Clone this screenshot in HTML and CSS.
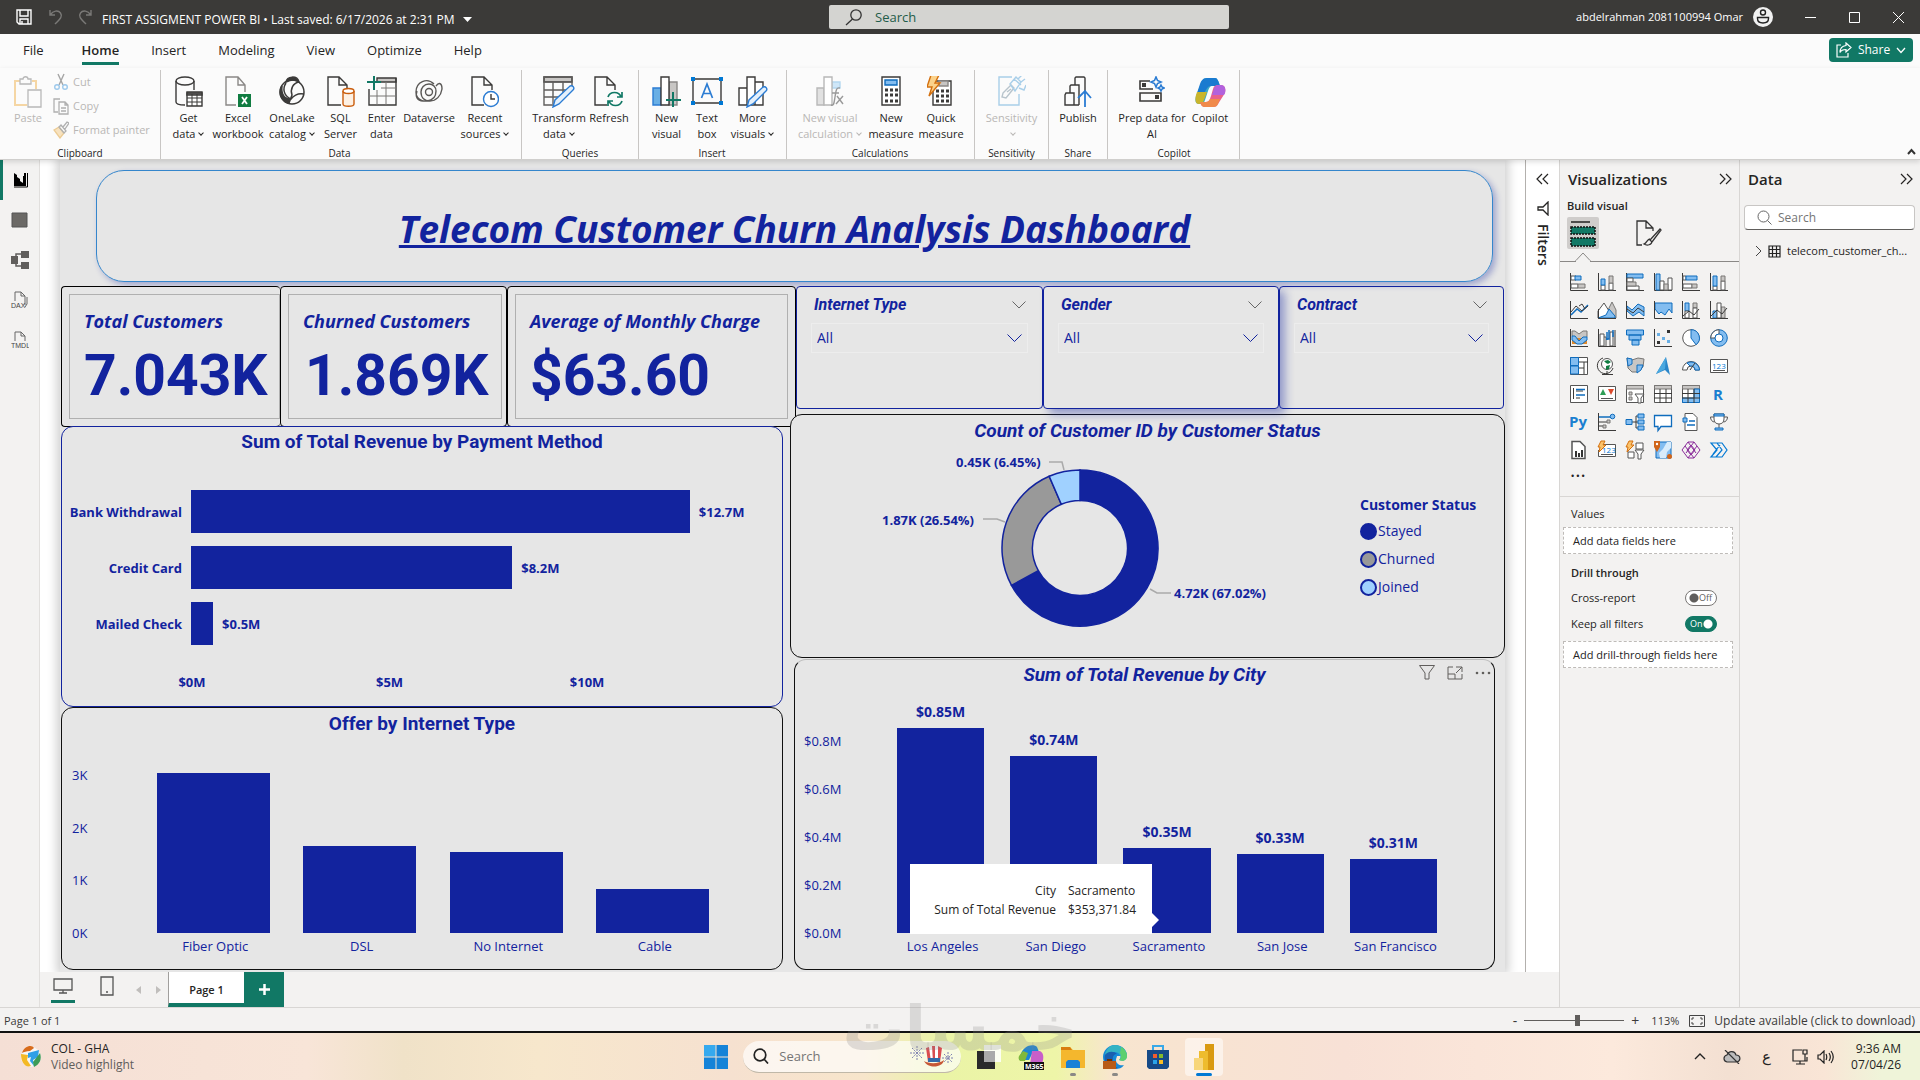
FILE: index.html
```html
<!DOCTYPE html>
<html lang="en">
<head>
<meta charset="utf-8">
<title>FIRST ASSIGMENT POWER BI</title>
<link rel="stylesheet" href="styles.css">
</head>
<body>
<header class="titlebar">
  <button class="bare" aria-label="Save"><svg width="18" height="18" viewBox="0 0 18 18" fill="none" stroke="#fff" stroke-width="1.4"><path d="M2 2h14v14H4l-2-2zM5 2v6h8V2M5 16v-5h8v5M7 16v-3"/></svg></button>
  <button class="bare" aria-label="Undo"><svg width="16" height="18" viewBox="0 0 16 18" fill="none" stroke="#7a7977" stroke-width="1.4"><path d="M2 2v5h5M2.500 6.500C5 3 10 1.500 12.500 5S12 11 7 16"/></svg></button>
  <button class="bare" aria-label="Redo"><svg width="16" height="18" viewBox="0 0 16 18" fill="none" stroke="#7a7977" stroke-width="1.400"><path d="M14 2v5H9M13.500 6.500C11 3 6 1.500 3.500 5S4 11 9 16"/></svg></button>
  <button class="bare file-name">FIRST ASSIGMENT POWER BI • Last saved: 6/17/2026 at 2:31 PM<svg width="9" height="6" viewBox="0 0 9 6"><path d="M0 0h9L4.500 5z" fill="#fff"/></svg></button>
  <label class="top-search"><svg width="18" height="18" viewBox="0 0 18 18" fill="none" stroke="#333" stroke-width="1.300"><circle cx="11" cy="7" r="5.200"/><path d="M7.500 11L1 17"/></svg><input type="text" placeholder="Search" aria-label="Search"></label>
  <div class="account">
    <span>abdelrahman 2081100994 Omar</span>
    <svg width="20" height="20" viewBox="0 0 20 20"><circle cx="10" cy="10" r="10" fill="#f1f1f1"/><g fill="none" stroke="#222" stroke-width="1.400"><circle cx="10" cy="5.500" r="2.500"/><path d="M4.500 10.500h11v1c0 3-2.500 4.500-5.500 4.500s-5.500-1.500-5.500-4.500z"/></g></svg>
    <button class="bare win" aria-label="Minimize"><svg width="11" height="11" stroke="#fff"><path d="M0 5.500h11"/></svg></button>
    <button class="bare win" aria-label="Maximize"><svg width="11" height="11" stroke="#fff" fill="none"><path d="M.5.500h10v10H.500z"/></svg></button>
    <button class="bare win" aria-label="Close"><svg width="11" height="11" stroke="#fff"><path d="M0 0l11 11M11 0L0 11"/></svg></button>
  </div>
</header>

<nav class="tabs">
  <button>File</button><button class="on">Home</button><button>Insert</button><button>Modeling</button><button>View</button><button>Optimize</button><button>Help</button>
  <button class="share"><svg width="16" height="16" viewBox="0 0 16 16" fill="none" stroke="#fff" stroke-width="1.200"><path d="M5 3H1v12h11v-4M10 1l5 4.500L10 10V7.500c-3 0-5 1-6 3 0-4 2-6.500 6-7z"/></svg>Share<svg width="10" height="7" viewBox="0 0 10 7" fill="none" stroke="#fff" stroke-width="1.300"><path d="M1 1l4 4.500L9 1"/></svg></button>
</nav>

<section class="ribbon">
  <div class="group clipboard">
    <div class="tools">
      <button class="tool off w-paste"><svg width="28" height="32" viewBox="0 0 28 32" fill="none"><path d="M6 5H1v24h12M18 5h4v8" stroke="#f5d6a4" stroke-width="2"/><path d="M6 3h3c0-3 5-3 5 0h3v5H6zM14 14h13v17H14z" fill="#fbfbfb" stroke="#b8b8b8" stroke-width="1.300"/></svg><span>Paste</span></button>
      <div class="mini">
        <button><svg width="16" height="18" viewBox="0 0 16 18" fill="none" stroke="#a5a5a5" stroke-width="1.400"><path d="M5 1l5 11M11 1L6 12"/><g stroke="#9dc9ec"><circle cx="4" cy="14" r="2.300"/><circle cx="12" cy="14" r="2.300"/></g></svg>Cut</button>
        <button><svg width="16" height="18" viewBox="0 0 16 18" fill="none" stroke="#b0b0b0" stroke-width="1.300"><path d="M7 2H1v13h4M6 5h6l3 3v9H6zM12 5v3h3M8 11h5M8 14h5"/></svg>Copy</button>
        <button><svg width="16" height="18" viewBox="0 0 16 18" fill="none" stroke="#b0b0b0" stroke-width="1.300"><path d="M1 9l5-3 5 6-4 5z" fill="#f7e2bf" stroke="#eccb93"/><path d="M6 6l5 6 2-2-5-6zM10 6l4-5 2 1-4 6"/></svg>Format painter</button>
      </div>
    </div>
    <h2>Clipboard</h2>
  </div>
  <div class="group">
    <div class="tools">
      <button class="tool w45"><svg width="28" height="32" viewBox="0 0 28 32" fill="none" stroke="#3b3a39" stroke-width="1.400"><path d="M1 5v21c0 2 4 3 9 3M19 5v9"/><ellipse cx="10" cy="5" rx="9" ry="4"/><path d="M12 16h15v14H12z" fill="#fff"/><path d="M12 17h15v2H12z" fill="#888"/><path d="M12 22h15M12 26h15M17 18v12M22 18v12" stroke-width="1"/></svg><span>Get<br>data<i></i></span></button>
      <button class="tool w54"><svg width="28" height="32" viewBox="0 0 28 32" fill="none" stroke="#8a8886" stroke-width="1.400"><path d="M12 29H2V1h12l7 8v7M14 1v8h7"/><path d="M14 18h13v13H14z" fill="#107c41" stroke="none"/><path d="M18 21l5 7M23 21l-5 7" stroke="#fff" stroke-width="1.800"/></svg><span>Excel<br>workbook</span></button>
      <button class="tool w54"><svg width="30" height="32" viewBox="0 0 30 32" fill="none" stroke="#3b3a39" stroke-width="1.500"><path d="M9 6C10 0 20-1 22 6c-4-3-9-2-13 0z" fill="#3b3a39"/><circle cx="15" cy="16" r="12"/><path d="M9 7c-4 6-2 13 5 16 4-5 8-6 13-5M22 6c-6 1-9 7-7 13l-3 8"/><path d="M5 10c-1 8 2 13 8 13l-2 4C4 24 1 16 5 10z" fill="#3b3a39"/></svg><span>OneLake<br>catalog<i></i></span></button>
      <button class="tool w43"><svg width="28" height="32" viewBox="0 0 28 32" fill="none" stroke="#3b3a39" stroke-width="1.400"><path d="M14 29H1V1h11l8 8v3M12 1v8h8"/><g stroke="#ca5d0c"><path d="M16 15v13c0 3 11 3 11 0V15" fill="#fdf0e3"/><ellipse cx="21.500" cy="15" rx="5.500" ry="2.500" fill="#fff"/></g></svg><span>SQL<br>Server</span></button>
      <button class="tool w39"><svg width="30" height="32" viewBox="0 0 30 32" fill="none" stroke="#3b3a39" stroke-width="1.400"><path d="M10 2h19v4H10z" fill="#c8c6c4"/><path d="M2 13v16h27V2"/><path d="M2 20h27M10 14v15M19 6v23M14 12h15" stroke="#797775" stroke-width="1"/><path d="M7 0v14M0 6h14" stroke="#117865" stroke-width="2"/></svg><span>Enter<br>data</span></button>
      <button class="tool w56"><svg width="30" height="32" viewBox="0 0 30 32" fill="none" stroke="#5a5856" stroke-width="1.400"><path d="M20 8C13 1 2 6 2 16c0 6 5 10 11 9 8-1 9-7 9-10 0-4-3-7-7-7-5 0-8 4-8 8 0 7 5 9 9 9 6 0 11-5 12-12 0-6-3-7-6-3M9 25c-6 0-8-5-6-10"/><circle cx="15" cy="16" r="3.500"/></svg><span>Dataverse</span></button>
      <button class="tool w56"><svg width="28" height="32" viewBox="0 0 28 32" fill="none" stroke="#3b3a39" stroke-width="1.400"><path d="M13 29H1V1h12l8 8v5M13 1v8h8"/><circle cx="20" cy="23" r="7.500" fill="#fff" stroke="#2b7cd3"/><path d="M20 18v5h4"/></svg><span>Recent<br>sources<i></i></span></button>
    </div>
    <h2>Data</h2>
  </div>
  <div class="group">
    <div class="tools">
      <button class="tool w58"><svg width="32" height="32" viewBox="0 0 32 32" fill="none" stroke="#3b3a39" stroke-width="1.400"><path d="M1 1h28v5H1z" fill="#c8c6c4"/><path d="M12 29H1V1h28v9M1 14h22M1 21h15M10 6v22M20 6v11" stroke="#605e5c"/><path d="M10 31l2-7 15-14c3-1 5 2 3 4L16 28z" fill="#e4f0fb" stroke="#2b7cd3"/></svg><span>Transform<br>data<i></i></span></button>
      <button class="tool w42"><svg width="30" height="32" viewBox="0 0 30 32" fill="none" stroke="#3b3a39" stroke-width="1.400"><path d="M13 29H1V1h12l8 8v5M13 1v8h8"/><g stroke="#117865" stroke-width="1.700"><path d="M14 21c2-6 11-6 13 0M28 16v5h-5M28 25c-2 6-11 6-13 0M14 30v-5h5"/></g></svg><span>Refresh</span></button>
    </div>
    <h2>Queries</h2>
  </div>
  <div class="group">
    <div class="tools">
      <button class="tool w41"><svg width="30" height="32" viewBox="0 0 30 32" fill="none" stroke="#3b3a39" stroke-width="1.400"><path d="M1 12h8v17H1z" fill="#69afe5" stroke="#2b7cd3"/><path d="M17 6h8v23h-8z" fill="#c8c6c4" stroke="#8a8886"/><path d="M9 1h8v28H9z" fill="#fff"/><path d="M21 16v15M14 24h15" stroke="#117865" stroke-width="2"/></svg><span>New<br>visual</span></button>
      <button class="tool w40"><svg width="32" height="32" viewBox="0 0 32 32" fill="none" stroke="#3b3a39" stroke-width="1.400"><path d="M2 3h28v24H2z"/><path d="M10.500 22L16 8l5.500 14M12.500 17.500h7" stroke="#2b7cd3" stroke-width="1.700"/><path d="M0 1h4v4H0zM28 1h4v4h-4zM0 25h4v4H0zM28 25h4v4h-4z" fill="#0078d4" stroke="none"/></svg><span>Text<br>box</span></button>
      <button class="tool w51"><svg width="30" height="32" viewBox="0 0 30 32" fill="none" stroke="#3b3a39" stroke-width="1.400"><path d="M1 12h8v17H1zM9 1h8v28H9zM17 6h8v23h-8z" fill="#fff"/><path d="M9 31l2-7 14-13c3-1 5 2 3 4L15 28z" fill="#e4f0fb" stroke="#2b7cd3"/></svg><span>More<br>visuals<i></i></span></button>
    </div>
    <h2>Insert</h2>
  </div>
  <div class="group">
    <div class="tools">
      <button class="tool off w72"><svg width="30" height="32" viewBox="0 0 30 32" fill="none" stroke="#b8b8b8" stroke-width="1.400"><path d="M2 12h7v17H2z" fill="#e1e1e1"/><path d="M17 6h8v6h-8z" fill="#cfe7f8" stroke="#b4d8f0"/><path d="M9 1h8v28H9z" fill="#fff"/><path d="M25 12c-4-1-4 3-5 9s-1 9-4 8M17 17h7M22 20l6 8M28 20l-7 8" stroke="#999"/></svg><span>New visual<br>calculation<i></i></span></button>
      <button class="tool w50"><svg width="24" height="32" viewBox="0 0 24 32" fill="none" stroke="#3b3a39" stroke-width="1.400"><path d="M3 1h18v28H3z" fill="#fff"/><path d="M6 4h12v5H6z" fill="#83bdf0" stroke="#0f6cbd"/><path d="M6 14h3m2 0h3m2 0h3M6 19h3m2 0h3m2 0h3M6 25h3m2 0h3m2 0h3" stroke-width="3"/></svg><span>New<br>measure</span></button>
      <button class="tool w50"><svg width="28" height="32" viewBox="0 0 28 32" fill="none" stroke="#3b3a39" stroke-width="1.400"><path d="M6 5h18v24H6z" fill="#fff"/><path d="M12 5h9v5h-9z" fill="#c8c6c4" stroke="#8a8886"/><path d="M9 15h3m2 0h3m2 0h3M9 20h3m2 0h3m2 0h3M9 25h3m2 0h3m2 0h3" stroke-width="3"/><path d="M4-1h8L8 7h5L2 20l3-9H0z" fill="#fbd28b" stroke="#d4700f"/></svg><span>Quick<br>measure</span></button>
    </div>
    <h2>Calculations</h2>
  </div>
  <div class="group">
    <div class="tools">
      <button class="tool off w63"><svg width="28" height="32" viewBox="0 0 28 32" fill="none" stroke="#a9cfe9" stroke-width="1.400"><path d="M14 1H1v28h20V18"/><path d="M5 17l8-8 3 3-8 10-4-1zM9 16l4-3" stroke="#b8c4cc"/><path d="M12 8l6-7 5 5-6 9zM20 3l4-4M23 6l4-3M21 12l5 2 2-5M16 3l7 6"/></svg><span>Sensitivity<br><i></i></span></button>
    </div>
    <h2>Sensitivity</h2>
  </div>
  <div class="group">
    <div class="tools">
      <button class="tool w48"><svg width="28" height="32" viewBox="0 0 28 32" fill="none" stroke="#3b3a39" stroke-width="1.400"><path d="M15 29H1V19l1-2h8v12M6 17V10l1-1h8v20M11 9V2l1-1h8l1 1v13"/><path d="M21 31V16M14 22l7-7 6 7" stroke="#2b7cd3" stroke-width="1.800"/></svg><span>Publish</span></button>
    </div>
    <h2>Share</h2>
  </div>
  <div class="group">
    <div class="tools">
      <button class="tool w72"><svg width="26" height="32" viewBox="0 0 26 32" fill="none" stroke="#3b3a39" stroke-width="1.600"><path d="M11 5H1v8h13M1 17h21v8H1z"/><path d="M3 7h4v4H3zM16 19h4v4h-4z" fill="#3b3a39" stroke="none"/><path d="M17 1l1.500 3.500L22 6l-3.500 1.500L17 11l-1.500-3.500L12 6l3.500-1.500zM22 9l1 2 2 1-2 1-1 2-1-2-2-1 2-1z" stroke="#2b7cd3"/></svg><span>Prep data for<br>AI</span></button>
      <button class="tool w44"><svg width="32" height="32" viewBox="0 0 32 32"><path d="M8 5c1-2 2-3 5-3h8c2 0 3 2 4 5l1 3h-8c-2 0-3 2-4 5l-3 9c-1 3-2 4-5 4H5c-4 0-4-4-3-8z" fill="#3aa8c9"/><path d="M3 17l3-9c1-3 3-6 7-6h8c2 0 3 2 4 5l1 3h-9c-4 0-5 5-7 7z" fill="#1a7bd0"/><path d="M2 19l1-3h10l-3 8c-1 3-2 4-5 4-4 0-4-5-3-9z" fill="#c9b52c"/><path d="M24 28c-1 2-2 3-5 3h-8c-3 0-4-2-5-5h6c3 0 4-3 5-6l2-7c1-3 2-4 5-4h3c4 0 5 4 4 8z" fill="#e8618c"/><path d="M24 9h3c4 0 5 4 4 8l-1 2H18l2-6c1-3 2-4 4-4z" fill="#b262dd"/><path d="M24 28c-1 2-2 3-5 3h-8c-3 0-4-2-5-5h6c2 0 3-1 4-3h10z" fill="#f08a4b"/></svg><span>Copilot</span></button>
    </div>
    <h2>Copilot</h2>
  </div>
  <button class="bare collapse" aria-label="Collapse ribbon"><svg width="9" height="7" viewBox="0 0 9 7" fill="none" stroke="#333" stroke-width="2"><path d="M1 6l3.500-4L8 6"/></svg></button>
</section>

<main>
  <nav class="rail">
    <button class="on" aria-label="Report view"><svg width="16" height="16" viewBox="0 0 16 16"><path d="M1 1l3 2v2l3 2v2l3 2V4h1V1h2v13H1z" fill="#000"/><path d="M1 15h13.500V1" stroke="#000" fill="none"/></svg></button>
    <button aria-label="Table view"><svg width="17" height="16" viewBox="0 0 17 16"><path d="M1 1h15v14H1z" fill="#6b6966" stroke="#555"/></svg></button>
    <button aria-label="Model view"><svg width="18" height="18" viewBox="0 0 18 18" fill="#605e5c"><path d="M0 5h7v8H0zM10 0h8v7h-8zM10 11h8v7h-8z"/><path d="M5 6V3h6M5 12v3h6" fill="none" stroke="#605e5c" stroke-width="1.500"/></svg></button>
    <button aria-label="DAX query view"><svg width="18" height="18" viewBox="0 0 18 18" fill="none" stroke="#666"><path d="M4 10V1h6l4 4v9M10 1v4h4M16 6v7l-2 3"/><text x="0" y="17" font-size="7" fill="#444" stroke="none">DAX</text></svg></button>
    <button aria-label="TMDL view"><svg width="18" height="18" viewBox="0 0 18 18" fill="none" stroke="#666"><path d="M4 10V1h6l4 4v5M10 1v4h4"/><text x="0" y="17" font-size="7" fill="#444" stroke="none">TMDL</text></svg></button>
  </nav>

  <div class="center">
    <div class="workspace">
      <div class="canvas"><div class="page">
        <h1>Telecom Customer Churn Analysis Dashboard</h1>
        <div class="board">
          <div class="col left">
            <div class="kpis">
              <article class="kpi k1"><div><h3>Total Customers</h3><p>7.043K</p></div></article>
              <article class="kpi k2"><div><h3>Churned Customers</h3><p>1.869K</p></div></article>
              <article class="kpi k3"><div><h3>Average of Monthly Charge</h3><p>$63.60</p></div></article>
            </div>
            <article class="card blue payment">
              <h3>Sum of Total Revenue by Payment Method</h3>
              <div class="hbars">
                <b>Bank Withdrawal</b><div><span class="bar" style="width:85.7%"></span><b>$12.7M</b></div>
                <b>Credit Card</b><div><span class="bar" style="width:55.2%"></span><b>$8.2M</b></div>
                <b>Mailed Check</b><div><span class="bar" style="width:3.8%"></span><b>$0.5M</b></div>
              </div>
              <div class="haxis"><b>$0M</b><b>$5M</b><b>$10M</b></div>
            </article>
            <article class="card offer">
              <h3>Offer by Internet Type</h3>
              <div class="plot">
                <div class="yaxis"><span>3K</span><span>2K</span><span>1K</span><span>0K</span></div>
                <div class="vbars">
                  <div><span class="bar" style="height:100%"></span></div>
                  <div><span class="bar" style="height:54.4%"></span></div>
                  <div><span class="bar" style="height:50.6%"></span></div>
                  <div><span class="bar" style="height:27.5%"></span></div>
                </div>
              </div>
              <div class="cats"><span>Fiber Optic</span><span>DSL</span><span>No Internet</span><span>Cable</span></div>
            </article>
          </div>
          <div class="col right">
            <div class="slicers">
              <div class="slicer s1"><div class="slicer-head"><label for="s-net">Internet Type</label><svg width="14" height="8" viewBox="0 0 14 8" fill="none" stroke="#666"><path d="M.5.500L7 7l6.500-6.500"/></svg></div><div class="pick"><select id="s-net"><option>All</option></select><svg width="15" height="9" viewBox="0 0 15 9" fill="none" stroke="#12239e"><path d="M.5.500l7 7 7-7"/></svg></div></div>
              <div class="slicer s2"><div class="slicer-head"><label for="s-gen">Gender</label><svg width="14" height="8" viewBox="0 0 14 8" fill="none" stroke="#666"><path d="M.5.500L7 7l6.500-6.500"/></svg></div><div class="pick"><select id="s-gen"><option>All</option></select><svg width="15" height="9" viewBox="0 0 15 9" fill="none" stroke="#12239e"><path d="M.5.500l7 7 7-7"/></svg></div></div>
              <div class="slicer s3"><div class="slicer-head"><label for="s-con">Contract</label><svg width="14" height="8" viewBox="0 0 14 8" fill="none" stroke="#666"><path d="M.5.500L7 7l6.500-6.500"/></svg></div><div class="pick"><select id="s-con"><option>All</option></select><svg width="15" height="9" viewBox="0 0 15 9" fill="none" stroke="#12239e"><path d="M.5.500l7 7 7-7"/></svg></div></div>
            </div>
            <article class="card status">
              <h3>Count of Customer ID by Customer Status</h3>
              <div class="status-body">
                <svg width="420" height="190" viewBox="0 0 420 190">
                  <g transform="translate(210 105)" stroke="#12239e" stroke-width="1.500">
                    <path d="M0-78A78 78 0 1 1-68.500 37.300L-41.700 22.700A47.500 47.500 0 1 0 0-47.500z" fill="#12239e"/>
                    <path d="M-68.500 37.300A78 78 0 0 1-30.800-71.700L-18.700-43.700A47.500 47.500 0 0 0-41.700 22.700z" fill="#999"/>
                    <path d="M-30.800-71.700A78 78 0 0 1 0-78V-47.500A47.500 47.500 0 0 0-18.700-43.700z" fill="#a0d1ff"/>
                  </g>
                  <path d="M179 19h13l2 8M113 76h14l8 3M280 146l7 4h14" fill="none" stroke="#aaa" stroke-width="1.500"/>
                  <g class="donut-text"><text x="86" y="24">0.45K (6.45%)</text><text x="12" y="82">1.87K (26.54%)</text><text x="304" y="155">4.72K (67.02%)</text></g>
                </svg>
                <div class="legend"><h4>Customer Status</h4><span class="c1">Stayed</span><span class="c2">Churned</span><span class="c3">Joined</span></div>
              </div>
            </article>
            <article class="card city">
              <h3>Sum of Total Revenue by City</h3>
              <div class="visual-tools"><svg width="16" height="15" viewBox="0 0 16 15" fill="none" stroke="#605e5c"><path d="M.5.500h15L10 8v6H6V8z"/></svg><svg width="16" height="14" viewBox="0 0 16 14" fill="none" stroke="#605e5c"><path d="M6 1H1v12h14V8M1 8h7v5M9 1h6v5M15 1L9 7"/></svg><svg width="16" height="4" fill="#605e5c"><circle cx="2" cy="2" r="1.300"/><circle cx="8" cy="2" r="1.300"/><circle cx="14" cy="2" r="1.300"/></svg></div>
              <div class="plot">
                <div class="yaxis"><span>$0.8M</span><span>$0.6M</span><span>$0.4M</span><span>$0.2M</span><span>$0.0M</span></div>
                <div class="vbars">
                  <div><b>$0.85M</b><span class="bar" style="height:85.4%"></span></div>
                  <div><b>$0.74M</b><span class="bar" style="height:73.8%"></span></div>
                  <div><b>$0.35M</b><span class="bar" style="height:35.4%"></span></div>
                  <div><b>$0.33M</b><span class="bar" style="height:32.9%"></span></div>
                  <div><b>$0.31M</b><span class="bar" style="height:30.8%"></span></div>
                </div>
              </div>
              <div class="cats"><span>Los Angeles</span><span>San Diego</span><span>Sacramento</span><span>San Jose</span><span>San Francisco</span></div>
              <div class="tip"><table><tr><th>City</th><td>Sacramento</td></tr><tr><th>Sum of Total Revenue</th><td>$353,371.84</td></tr></table></div>
            </article>
          </div>
        </div>
      </div></div>
      <aside class="filters"><svg width="13" height="12" viewBox="0 0 13 12" fill="none" stroke="#252423" stroke-width="1.200"><path d="M6 1L1 6l5 5M12 1L7 6l5 5"/></svg><svg width="12" height="15" viewBox="0 0 12 15" fill="none" stroke="#252423" stroke-width="1.300"><path d="M11 1v13L6 9H1V6h5z"/></svg><h2>Filters</h2></aside>
    </div>
    <div class="pages">
      <button class="layout on" aria-label="Desktop layout"><svg width="20" height="16" viewBox="0 0 20 16" fill="none" stroke="#555" stroke-width="1.300"><path d="M1 1h18v11H1zM10 12v3M6 15h8"/></svg></button>
      <button class="layout" aria-label="Mobile layout"><svg width="14" height="20" viewBox="0 0 14 20" fill="none" stroke="#555" stroke-width="1.300"><path d="M1 1h12v18H1zM6 16h2"/></svg></button>
      <button class="arrow" aria-label="Previous page"><svg width="5" height="8"><path d="M5 0v8L0 4z" fill="#c0bebc"/></svg></button>
      <button class="arrow" aria-label="Next page"><svg width="5" height="8"><path d="M0 0v8l5-4z" fill="#c0bebc"/></svg></button>
      <button class="page-tab">Page 1</button>
      <button class="add" aria-label="New page"><svg width="11" height="11" stroke="#fff" stroke-width="2.500"><path d="M5.500 0v11M0 5.500h11"/></svg></button>
    </div>
  </div>

  <aside class="viz">
    <div class="pane-head"><h2>Visualizations</h2><svg width="13" height="12" viewBox="0 0 13 12" fill="none" stroke="#252423" stroke-width="1.200"><path d="M1 1l5 5-5 5M7 1l5 5-5 5"/></svg></div>
    <h3>Build visual</h3>
    <div class="modes">
      <button class="on" aria-label="Build"><svg width="26" height="28" viewBox="0 0 26 28"><path d="M1 3h19" stroke="#222" stroke-width="1.500"/><path d="M1 8h24v7H1zM1 19h24v8H1z" fill="#117865" stroke="#111" stroke-width="1.500" stroke-dasharray="2 1"/></svg></button>
      <button aria-label="Format"><svg width="26" height="28" viewBox="0 0 26 28" fill="none" stroke="#333" stroke-width="1.300"><path d="M6 26H1V2h9l7 7v3M10 2v7h7M24 10L14 21l2 2 9-12zM14 20c-3 0-3 4-6 5 3 2 8 1 8-3"/></svg></button>
    </div>
    <svg class="notch" width="40" height="10" viewBox="0 0 40 10"><path d="M7 9.500L15 1l8 8.500z" fill="#f3f2f1" stroke="#8a8886"/><path d="M8 9.500h14" stroke="#f3f2f1" stroke-width="2"/></svg>
    <div class="gallery">
      <svg viewBox="0 0 18 18"><path d="M.5 0v17.500H18" class="k"/><path d="M1 3h5v4H1zM1 11h7v4H1z" class="w"/><path d="M5 3h6v4H5z" class="b"/><path d="M8 11h7v4H8z" class="g"/></svg>
      <svg viewBox="0 0 18 18"><path d="M.5 0v17.500H18" class="k"/><path d="M3 12h4v5H3zM11 10h4v7h-4z" class="w"/><path d="M3 6h4v6H3z" class="b"/><path d="M11 3h4v7h-4z" class="g"/></svg>
      <svg viewBox="0 0 18 18"><path d="M.5 0v17.500H18" class="k"/><path d="M1 1h16v4H1z" class="b"/><path d="M1 5h6v4H1zM1 13h12v4H1z" class="w"/><path d="M1 9h9v4H1z" class="g"/></svg>
      <svg viewBox="0 0 18 18"><path d="M.5 0v17.500H18" class="k"/><path d="M2 1h4v16H2z" class="b"/><path d="M6 8h4v9H6zM14 5h4v12h-4z" class="w"/><path d="M10 11h4v6h-4z" class="g"/></svg>
      <svg viewBox="0 0 18 18"><path d="M.5 0v17.500H18" class="k"/><path d="M1 3h3v4H1zM1 11h9v4H1z" class="w"/><path d="M4 3h11v4H4z" class="b"/><path d="M10 11h5v4h-5z" class="g"/></svg>
      <svg viewBox="0 0 18 18"><path d="M.5 0v17.500H18" class="k"/><path d="M3 13h4v4H3zM11 8h4v9h-4z" class="w"/><path d="M3 3h4v10H3z" class="b"/><path d="M11 3h4v5h-4z" class="g"/></svg>
      <svg viewBox="0 0 18 18"><path d="M.5 0v17.500H18" class="k"/><path d="M1 14l6-6 4 3 7-7" class="bl"/><path d="M1 11l5-6 6 5 6-5M9 5l3-2 3 5" class="k"/></svg>
      <svg viewBox="0 0 18 18"><path d="M10 9l4-8 4 8v8h-8z" class="g"/><path d="M0 10l6-8 5 8v7H0z" class="w"/><path d="M0 17l8-3 3-6 6 7v2z" class="b"/><path d="M.5 8v9.500H18" class="k"/></svg>
      <svg viewBox="0 0 18 18"><path d="M1 5l5 4 6-6 6 3v9l-5-4-6 4-6-5z" class="b"/><path d="M.5 0v17.500H18M1 8l6 4 5-5 6 4" class="k"/></svg>
      <svg viewBox="0 0 18 18"><path d="M1 2h17v10l-3-4-4 6-4-3-2 2-4-5z" class="b"/><path d="M.5 0v17.500H18" class="k"/></svg>
      <svg viewBox="0 0 18 18"><path d="M3 2h4v8H3z" class="b"/><path d="M11 2h4v5h-4z" class="g"/><path d="M3 10h4v7H3zM11 7h4v10h-4z" class="w"/><path d="M.5 0v17.500H18M1 15l6-5 5 4 5-6" class="k"/></svg>
      <svg viewBox="0 0 18 18"><path d="M3 10h4v7H3z" class="b"/><path d="M11 6h4v11h-4z" class="g"/><path d="M7 2h4v15H7z" class="w"/><path d="M.5 0v17.500H18M1 15l6-6 5 4 5-6" class="k"/></svg>
      <svg viewBox="0 0 18 18"><path d="M2 2h3l4 3 4-3h4v6l-4 3H8L2 7z" class="g"/><path d="M2 9h15v6H2z" fill="#e08a2c"/><path d="M2 7h3l4 5 4-4h4v3l-5 4H7l-5-4z" class="b"/><path d="M.5 0v17.500H18" class="k"/></svg>
      <svg viewBox="0 0 18 18"><path d="M2 5h4v12H2zM6 8h2v9M12 3h3v14h-3z" class="w"/><path d="M9 3v8M11 1v9H8M15 1v7" class="bl"/><path d="M.5 0v17.500H18M17 1v16" class="k"/></svg>
      <svg viewBox="0 0 18 18"><path d="M.5 1h17v5H.5zM3 6h12v5H3zM6 11h7v5H6z" class="b"/></svg>
      <svg viewBox="0 0 18 18"><path d="M.5 0v17.500H18" class="k"/><path d="M3 4h3v3H3zM8 8h3v3H8zM13 11h3v3h-3z" fill="#69afe5"/><path d="M13 1h3v3h-3zM3 12h3v3H3z" fill="#333"/></svg>
      <svg viewBox="0 0 18 18"><circle cx="9" cy="9" r="8.300" class="w"/><path d="M9 9V.7a8.300 8.300 0 0 1 5 15z" class="b"/></svg>
      <svg viewBox="0 0 18 18"><circle cx="9" cy="9" r="8.300" class="b"/><path d="M9 .7A8.300 8.300 0 0 0 .7 9H5a4 4 0 0 1 4-4z" class="w"/><circle cx="9" cy="9" r="4" fill="#fff" stroke="#0f6cbd"/></svg>
      <svg viewBox="0 0 18 18"><path d="M.5.500h17v17H.5z" class="w"/><path d="M.5.500h8v8h-8zM.5 9h8v8h-8z" class="b"/><path d="M9 5h9M14 5v12M9 11h5" class="k"/></svg>
      <svg viewBox="0 0 18 18"><circle cx="9" cy="7" r="5.500" class="w"/><path d="M6 4l4-1 3 2-3 2-2-1zM8 9l4-1-1 4-3 1z" fill="#107c41"/><path d="M5 1a8 8 0 1 0 10 10M9 14v3M4 17.500h11" class="k"/></svg>
      <svg viewBox="0 0 18 18"><path d="M1 1l5 2 6-2 6 1-1 8-5 5H6l-4-4z" class="g"/><path d="M1 1l5 1v5l-4 2zM11 8h6l-2 5-4 3z" class="b"/></svg>
      <svg viewBox="0 0 18 18"><path d="M12 0l4 18-5-5-9 4z" fill="#2a86c9"/><path d="M12 0L2 17l9-5z" fill="#4aa8df"/></svg>
      <svg viewBox="0 0 18 18"><path d="M.5 13a8.500 8.500 0 0 1 17 0H13a4 4 0 0 0-8 0z" class="w"/><path d="M5 6a8.500 8.500 0 0 1 12.500 7H13a4 4 0 0 0-5-4z" class="b"/><path d="M8 13l5-7" class="k"/></svg>
      <svg viewBox="0 0 18 18"><path d="M.5 2.500h17v13H.5zM3 13.500h12" class="w"/><text x="2" y="12" class="num">123</text></svg>
      <svg viewBox="0 0 18 18"><path d="M.5.500h17v17H.5z" class="w"/><path d="M3.500 3v11M6 6h7M6 13h4" class="k"/><path d="M6 4.500h9M6 10h9" class="bl"/></svg>
      <svg viewBox="0 0 18 18"><path d="M.5 1.500h17v14H.5zM3 13.500h12" class="w"/><path d="M2 10l3-6 3 6z" fill="#2f9e57"/><path d="M10 4h6l-3 6z" fill="#dc4a2c"/></svg>
      <svg viewBox="0 0 18 18"><path d="M.5.500h17v17H.5z" class="w"/><path d="M.5.500h17V4H.5zM3 7h3v3H3zM3 12h3v3H3z" class="g"/><path d="M9 9h9l-3 4v5h-3v-5z" class="w"/></svg>
      <svg viewBox="0 0 18 18"><path d="M.5.500h17v17H.5z" class="w"/><path d="M.5.500h17V4H.5z" class="g"/><path d="M0 8.500h18M0 13h18M6 4v14M12 4v14" class="k"/></svg>
      <svg viewBox="0 0 18 18"><path d="M.5.500h17v17H.5z" class="w"/><path d="M.5.500h17V4H.5z" class="g"/><path d="M12 4h5.500v13.500H.5V13H12z" class="b"/><path d="M0 8.500h18M0 13h18M6 4v14M12 4v14" class="k"/></svg>
      <svg viewBox="0 0 18 18"><text x="3" y="15" class="letter">R</text></svg>
      <svg viewBox="0 0 18 18"><text x="-1" y="14" class="letter">Py</text></svg>
      <svg viewBox="0 0 18 18"><path d="M.5 0v17.500H18" class="k"/><path d="M1 4h13" class="bl"/><path d="M1 9h9M1 13h5" class="k"/><circle cx="14.500" cy="3.500" r="2.300" class="b"/><path d="M9 7h3v3H9zM5 12h3v3H5z" class="g"/></svg>
      <svg viewBox="0 0 18 18"><path d="M6 9h4M13 3h-3v12h3M10 9h3" class="k"/><path d="M0 6.500h6v5H0zM12 1h6v4h-6zM12 7h6v4h-6zM12 13h6v4h-6z" class="b"/></svg>
      <svg viewBox="0 0 18 18"><path d="M.5 2.500h17v11H7l-3 4v-4H.5z" fill="#fff" stroke="#0f6cbd" stroke-width="1.300"/></svg>
      <svg viewBox="0 0 18 18"><path d="M3 .5h8l4 4v13H3z" class="w"/><path d="M1 5h4v4H1z" class="b"/><path d="M7 8h6M5 12h8" class="bl"/></svg>
      <svg viewBox="0 0 18 18"><path d="M4 1h10v5c0 3-2 5-5 5S4 9 4 6zM4 4H.5c0 3 2 5 4 5M14 4h3.500c0 3-2 5-4 5M9 11v4" class="w"/><path d="M4 1h10v2H4zM5 15h8v2H5z" class="b"/></svg>
      <svg viewBox="0 0 18 18"><path d="M2 .5h8l5 5v12H2z" class="w" stroke-width="1.500"/><path d="M6 10v6M9 12v4M12 9v7" stroke="#333" stroke-width="2"/></svg>
      <svg viewBox="0 0 18 18"><path d="M4 3.500h13.500v12H.5V9M3 13.500h12" class="w"/><text x="4" y="12" class="num">123</text><path d="M3 0h4L5 4h3L1 11l1-5H0z" class="o"/></svg>
      <svg viewBox="0 0 18 18"><path d="M10 2h7v6h-7zM2 11h6v6H2z" class="w"/><path d="M9 9h9l-3 4v5h-3v-5z" class="w"/><path d="M3 0h4L5 4h3L1 11l1-5H0z" class="o"/></svg>
      <svg viewBox="0 0 18 18"><path d="M2 1h15v16H2z" class="b"/><path d="M13 1L9 8l-4 4 1 5h6l1-6 4-4V1z" fill="#d9ecfb"/><path d="M0 0h6v6l-3 5-3-5z" fill="#d0651a"/><circle cx="3" cy="3" r="1.200" fill="#fff"/><circle cx="15.500" cy="15.500" r="2.500" fill="#d0651a"/></svg>
      <svg viewBox="0 0 18 18" fill="none" stroke="#8a2b9a"><path d="M6 1h6l6 8-6 8H6L0 9zM9 4l4 5-4 5-4-5zM6 1l8 11M12 1L4 12M3 5l9 12M15 5L6 17"/></svg>
      <svg viewBox="0 0 18 18" fill="none" stroke="#0078d4" stroke-width="1.200"><path d="M1 2h11l5 7-5 7H1l6-7zM7 2l5 7-6 7M3 13L10 4"/></svg>
    </div>
    <button class="bare dots" aria-label="More visuals">···</button>
    <div class="wells">
      <h4>Values</h4>
      <div class="well">Add data fields here</div>
      <h4 class="strong">Drill through</h4>
      <div class="switch"><label for="cross">Cross-report</label><span class="toggle"><input type="checkbox" id="cross"><span>Off</span></span></div>
      <div class="switch"><label for="keep">Keep all filters</label><span class="toggle yes"><input type="checkbox" id="keep" checked><span>On</span></span></div>
      <div class="well">Add drill-through fields here</div>
    </div>
  </aside>

  <aside class="data">
    <div class="pane-head"><h2>Data</h2><svg width="13" height="12" viewBox="0 0 13 12" fill="none" stroke="#252423" stroke-width="1.200"><path d="M1 1l5 5-5 5M7 1l5 5-5 5"/></svg></div>
    <label class="data-search"><svg width="15" height="15" viewBox="0 0 15 15" fill="none" stroke="#666"><circle cx="6.500" cy="6.500" r="5.500"/><path d="M10.500 10.500l4 4"/></svg><input type="text" placeholder="Search" aria-label="Search data"></label>
    <button class="tree"><svg width="7" height="12" viewBox="0 0 7 12" fill="none" stroke="#444"><path d="M1 1l5 5-5 5"/></svg><svg width="13" height="13" viewBox="0 0 13 13" fill="none" stroke="#222" stroke-width="1.200"><path d="M1 1h11v11H1zM1 4.500h11M1 8.500h11M4.500 1v11M8.500 1v11"/></svg><span>telecom_customer_ch...</span></button>
  </aside>
</main>

<footer class="statusbar">
  <span>Page 1 of 1</span>
  <div class="zoom"><button class="bare">-</button><input type="range" min="10" max="210" value="116" aria-label="Zoom"><button class="bare">+</button></div>
  <span class="percent">113%</span>
  <svg width="16" height="12" viewBox="0 0 16 12" fill="none" stroke="#444"><path d="M.5.500h15v11H.5zM3 5V3h2M11 3h2v2M13 7v2h-2M5 9H3V7"/></svg>
  <a href="#">Update available (click to download)</a>
</footer>

<footer class="taskbar">
  <button class="widget"><svg width="22" height="24" viewBox="0 0 22 24"><circle cx="11" cy="12" r="10" fill="#f6f6f6"/><path d="M2 8C4 1 12-1 14 3l-4 3C6 6 4 7 2 8z" fill="#d86c1c"/><path d="M1 9l7 1-1 5 4 6c-6 2-10-4-10-12z" fill="#f4b925"/><path d="M8 8l11-3-1 7-5 3 1 6-4-5 1-4-3 1z" fill="#2f9fe8"/><path d="M20 8c2 6 0 11-6 14l-1-5z" fill="#3d9b57"/></svg><span>COL - GHA<small>Video highlight</small></span></button>
  <div class="apps">
    <button aria-label="Start"><svg width="24" height="24" viewBox="0 0 24 24" fill="#1583d8"><path d="M0 0h11.500v11.500H0z" fill="#35a9ee"/><path d="M12.500 0H24v11.500H12.500zM0 12.500h11.500V24H0zM12.500 12.500H24V24H12.500z"/></svg></button>
    <label class="task-search"><svg width="16" height="16" viewBox="0 0 16 16" fill="none" stroke="#222" stroke-width="1.700"><circle cx="7" cy="7" r="5.800"/><path d="M11 11l4 4.500"/></svg><input type="text" placeholder="Search" aria-label="Search Windows"><svg width="46" height="24" viewBox="0 0 46 24"><g stroke="#7c7fb0" fill="none"><path d="M1 9h14M8 2v14M3 4l10 10M13 4L3 14M33 14h12M39 8v12M35 10l8 8M43 10l-8 8" stroke-dasharray="2 1"/></g><path d="M17 4c4-3 12-3 16 0l-2 14H19z" fill="#fff"/><path d="M17 4l3-1 2 15h-3zM23 2h3v16h-2zM29 2l4 2-2 14h-2z" fill="#d94d50"/><path d="M19 14h12v4H19z" fill="#356aa8"/><path d="M15 17c5 3 15 3 20-1-1 8-16 9-20 1z" fill="#c75836"/></svg></label>
    <button aria-label="Task view"><svg width="26" height="26" viewBox="0 0 26 26"><path d="M1 7h18v18H1z" fill="#2a2a2a"/><path d="M8 1h17v17H8z" fill="#fff" opacity=".85"/><path d="M8 7h11v11H8z" fill="#aaa"/></svg></button>
    <button aria-label="Microsoft 365 Copilot"><svg width="26" height="26" viewBox="0 0 26 26"><path d="M7 4c2-3 10-4 12-1l2 5h-6l-4 8H1C2 11 4 6 7 4z" fill="#1b86d6"/><path d="M1 12l4-5 5 2-3 8H2c-1-1-2-3-1-5z" fill="#7fb93c"/><path d="M14 7h8c4 2 4 7 2 13H12z" fill="#c85fc9"/><path d="M6 18h20v8H6z" fill="#111"/><text x="7" y="25" font-size="7" font-weight="700" fill="#fff">M365</text></svg></button>
    <button class="open" aria-label="File Explorer"><svg width="26" height="24" viewBox="0 0 26 24"><path d="M1 2h9l3 3h12v18H1z" fill="#f4b72d"/><path d="M1 2h9l2 3H1z" fill="#d97d10"/><path d="M6 17l2-2h10l2 2v6H6z" fill="#1781d6"/></svg></button>
    <button class="open" aria-label="Edge"><svg width="26" height="26" viewBox="0 0 26 26"><path d="M13 1C6 1 1 7 1 13s5 12 12 12c4 0 7-1 9-4-4 1-8-1-8-5 0-2 1-3 1-4h10C25 6 20 1 13 1z" fill="#168ad8"/><path d="M13 1c7 0 12 5 12 11 0 4-4 6-8 4 3-3 1-8-5-8-4 0-7 1-9 3C4 5 8 1 13 1z" fill="#35b3c4"/><path d="M19 3c4 2 6 6 6 9 0 4-4 6-8 4 3-2 2-5 1-7z" fill="#5ccf6e"/><path d="M3 11c3-4 9-4 12-1-3 0-5 3-4 6-1 3 2 7 5 8C8 27 1 20 3 11z" fill="#1a5fb0"/><path d="M1 17h13v8H1z" fill="#b85b17"/><path d="M5 15h5v2H5z" fill="#6b3208"/></svg></button>
    <button aria-label="Store"><svg width="24" height="26" viewBox="0 0 24 26"><path d="M7 7V2h10v5" fill="none" stroke="#39a9e8" stroke-width="2"/><path d="M1 6h22v17l-2 2H3l-2-2z" fill="#164a87"/><path d="M7 10h4v4H7z" fill="#f15b2d"/><path d="M13 10h4v4h-4z" fill="#84bb2c"/><path d="M7 16h4v4H7z" fill="#2ba4e8"/><path d="M13 16h4v4h-4z" fill="#f8bd24"/></svg></button>
    <button class="open current" aria-label="Power BI Desktop"><svg width="22" height="26" viewBox="0 0 22 26"><path d="M12 0h9v26h-9z" fill="#d99a12"/><path d="M6 7h9v19H6z" fill="#eebc2d"/><path d="M1 14h9v12H1z" fill="#f7d67a"/></svg></button>
  </div>
  <div class="tray">
    <svg width="12" height="7" viewBox="0 0 12 7" fill="none" stroke="#222" stroke-width="1.400"><path d="M1 6l5-5 5 5"/></svg>
    <svg width="18" height="14" viewBox="0 0 18 14" fill="#bbb" stroke="#333" stroke-width="1.200"><path d="M4 12c-4-1-4-6 0-7 2-5 8-4 9 0 5 0 5 6 1 7zM2 0l14 14"/></svg>
    <span class="lang">ع</span>
    <svg width="17" height="16" viewBox="0 0 17 16" fill="none" stroke="#222" stroke-width="1.200"><path d="M10 1H1v11h14V8M8 12v3M4 15h9M11 1h4v4h-4zM13 5v7"/></svg>
    <svg width="17" height="14" viewBox="0 0 17 14" fill="none" stroke="#222" stroke-width="1.200"><path d="M1 5h2l4-4v12L3 9H1zM9 4c1 2 1 4 0 6M12 3c2 3 2 5 0 8M14 1c3 4 3 8 0 12"/></svg>
    <time>9:36 AM<br>07/04/26</time>
  </div>
  <div class="mark" dir="rtl" lang="ar">خمسات</div>
</footer>
</body>
</html>
```
FILE: styles.css
```css
:root { --navy: #12239e; --green: #117865; --line: #d8d6d4; --pane: #f3f2f1; }
* { box-sizing: border-box; }
body { margin: 0; min-height: 100vh; display: flex; flex-direction: column; font: 11px/16px "Open Sans", "Noto Sans", sans-serif; color: #252423; background: var(--pane); }
h1, h2, h3, h4, p { margin: 0; font-size: inherit; font-weight: 400; }
button, input, select { font: inherit; color: inherit; }
button { border: 0; padding: 0; background: none; display: flex; align-items: center; justify-content: center; white-space: nowrap; }
input { border: 0; background: none; min-width: 0; outline: 0; padding: 0; }
svg { flex: none; display: block; }

.titlebar { height: 34px; background: #3b3a38; color: #fff; display: grid; grid-template-columns: 44px 24px 34px 727fr 400px 691fr; align-items: center; }
.titlebar > button:first-child { padding-left: 4px; }
.file-name { justify-content: flex-start; gap: 8px; padding-top: 5px; font-size: 12px; }
.top-search { height: 24px; display: flex; align-items: center; gap: 12px; padding-left: 16px; background: #d4d4d1; border-radius: 2px; font-size: 13px; }
.top-search input::placeholder { color: #1f5c49; opacity: 1; }
.account { display: flex; align-items: center; justify-content: flex-end; gap: 10px; }
.win { width: 34px; height: 34px; }
.account .win:last-child { margin-right: 5px; }
.account svg + .win { margin-left: 10px; }

.tabs { height: 34px; display: flex; gap: 32px; padding: 0 7px 0 23px; background: #fbfbfb; font-size: 13px; }
.tabs button { border-bottom: 3px solid transparent; height: 31px; padding-top: 3px; }
.tabs button:first-child { margin-right: 6px; }
.tabs .on { font-weight: 600; border-color: var(--green); }
.tabs .share { margin: 4px 0 0 auto; height: 24px; width: 84px; padding: 0; border: 0; border-radius: 4px; background: var(--green); color: #fff; font-size: 12px; gap: 6px; }

.ribbon { height: 92px; display: flex; background: #fbfbfb; border-bottom: 1px solid #d0cfcd; box-shadow: 0 2px 5px #0002; position: relative; z-index: 3; }
.group { margin: 2px 0 0; border-right: 1px solid #c8c6c4; padding: 0 5px; display: flex; flex-direction: column; justify-content: space-between; }
.group h2 { text-align: center; font-size: 10px; line-height: 12px; }
.tools { display: flex; padding-top: 6px; }
.tool { flex-direction: column; justify-content: flex-start; gap: 2px; }
.tool span { line-height: 16px; }
.tool i { display: inline-block; width: 4px; height: 4px; margin: 0 1px 3px 4px; border: solid currentColor; border-width: 0 1px 1px 0; rotate: 45deg; }
.off, .mini { color: #b9b7b5; }
.clipboard { width: 161px; }
.mini button { justify-content: flex-start; gap: 4px; height: 24px; }
.mini { margin: -6px 0 0 6px; }
.w-paste { width: 38px; margin-left: 4px; }
.w39 { width: 39px; } .w40 { width: 40px; } .w41 { width: 41px; } .w42 { width: 42px; } .w43 { width: 43px; } .w44 { width: 44px; } .w45 { width: 45px; } .w48 { width: 48px; } .w50 { width: 50px; } .w51 { width: 51px; } .w54 { width: 54px; } .w56 { width: 56px; } .w58 { width: 58px; } .w63 { width: 63px; } .w72 { width: 72px; }
.group:nth-child(2) { padding: 0 8px 0 5px; }
.group:nth-child(3) { padding: 0 8px; }
.group:nth-child(4), .group:nth-child(5) { padding: 0 8px 0 7px; }
.group:nth-child(8) { padding: 0 7px 0 8px; }
.collapse { margin: auto 4px 4px auto; }

main { flex: 1; display: grid; grid-template-columns: 40px 1fr 180px 181px; }
.rail { border-right: 1px solid #e1dfdd; }
.rail button { width: 39px; height: 40px; }
.rail .on { border-left: 3px solid var(--green); }
.rail text { font-family: "Liberation Sans", sans-serif; }
.center { display: flex; flex-direction: column; min-width: 0; }
.workspace { flex: 1; display: flex; background: #fff; }
.canvas { flex: 1; min-width: 0; padding: 0 20px; overflow: hidden; }
.filters { width: 34px; border-left: 1px solid #b3b0ad; display: flex; flex-direction: column; align-items: center; padding-top: 13px; gap: 16px; }
.filters h2 { writing-mode: vertical-rl; font-size: 14px; font-weight: 600; line-height: 18px; margin-top: -8px; }

.page { height: 100%; display: flex; flex-direction: column; padding-bottom: 2px; background: #e6e6e6; box-shadow: 0 0 10px 3px #0003; color: var(--navy); }
h1 { margin: 10px 12px 4px 36px; height: 112px; border: 1px solid #3586cc; border-radius: 28px; box-shadow: 3px 3px 6px #12239e55; display: flex; align-items: center; justify-content: center; font-size: 37px; font-weight: 700; font-style: italic; text-decoration: underline; padding-top: 6px; white-space: nowrap; }
.board { flex: 1; display: grid; grid-template-columns: 730fr 715fr; }
.col { display: flex; flex-direction: column; min-width: 0; }
.kpis { display: grid; grid-template-columns: minmax(0, 219fr) minmax(0, 227fr) minmax(0, 289fr); height: 140px; margin: 0 -6px 0 1px; }
.kpi { border: 1px solid #000; border-radius: 4px; padding: 7px 4px 7px 7px; background: #e6e6e6; white-space: nowrap; }
.k1 { padding-right: 0; border-right: 0; }
.k3 { padding-right: 7px; }
.kpi > div { height: 100%; border: 1px solid #b0b0b0; padding: 13px 0 0 14px; }
.kpi h3 { font-size: 18px; line-height: 26px; font-weight: 700; font-style: italic; }
.kpi p { font: 700 57px/84px Roboto, sans-serif; }
.k2 p { padding-left: 2px; }
.card { border: 1px solid #111; border-radius: 12px; background: #e6e6e6; }
.blue { border-color: var(--navy); }
.card h3 { font: 700 19px/24px Roboto, sans-serif; text-align: center; }
.bar { display: block; background: var(--navy); }
.left .card { margin: 0 7px 0 1px; }
.payment { height: 281px; padding-top: 3px; font-size: 13px; }
.hbars { display: grid; grid-template-columns: 120px 1fr; grid-auto-rows: 43px; gap: 13px 9px; align-items: center; padding: 36px 9px 0 0; }
.hbars > b { text-align: right; }
.hbars > div { display: flex; align-items: center; gap: 9px; }
.hbars .bar { height: 43px; }
.hbars b, .haxis b { font-weight: 700; }
.haxis { display: grid; grid-template-columns: repeat(3, 34%); margin: 29px 9px 0 130px; }
.haxis b { width: 0; display: flex; justify-content: center; }
.offer { flex: 1; padding-top: 4px; font-size: 13px; }
.plot { display: grid; }
.yaxis { display: flex; flex-direction: column; justify-content: space-between; }
.yaxis span { line-height: 0; }
.vbars, .cats { display: grid; grid-auto-flow: column; grid-auto-columns: 1fr; }
.vbars > div { display: flex; flex-direction: column; justify-content: flex-end; align-items: center; }
.vbars .bar { width: 77%; flex: none; }
.cats { text-align: center; line-height: 16px; white-space: nowrap; }
.offer .plot { height: 160px; margin-top: 37px; grid-template-columns: 68px 1fr; padding: 0 56px 0 10px; }
.offer .yaxis { padding-top: 2px; }
.offer .cats { padding: 5px 54px 0 80px; }

.slicers { display: grid; grid-template-columns: 247fr 236fr 225fr; margin: 0 1px 5px 6px; height: 123px; }
.slicer { border: 1px solid var(--navy); border-radius: 4px; padding: 7px 14px; background: #e6e6e6; }
.s2 { box-shadow: 6px 5px 10px #12239e66; z-index: 1; }
.slicer-head { display: flex; justify-content: space-between; align-items: center; font: italic 700 16px/22px Roboto, sans-serif; padding: 0 2px 0 3px; }
.pick { display: grid; align-items: center; height: 30px; margin-top: 7px; border: 1px solid #ededed; font-size: 14px; }
.pick > * { grid-area: 1 / 1; }
.pick select { appearance: none; border: 0; background: none; width: 100%; padding: 0 5px; outline: 0; }
.pick svg { justify-self: end; margin-right: 5px; pointer-events: none; }
.s3 { background: none; }
.status { height: 244px; padding: 4px 0 0; }
.status h3, .city h3 { font-style: italic; }
.status-body { display: flex; justify-content: space-between; padding: 0 22px 0 79px; }
.donut-text { font-size: 13px; font-weight: 700; fill: var(--navy); }
.legend { width: 122px; padding-top: 50px; font-size: 14px; line-height: 28px; white-space: nowrap; }
.legend h4 { font-size: 14px; line-height: 24px; font-weight: 700; }
.legend span { display: flex; align-items: center; gap: 1px; }
.legend span::before { content: ""; width: 13px; height: 13px; border: 2px solid var(--navy); border-radius: 50%; background: var(--navy); }
.legend .c2::before { background: #999; }
.legend .c3::before { background: #a0d1ff; }
.city { flex: 1; margin: 1px 10px 0 4px; padding-top: 3px; position: relative; border-top-color: #bbb; font-size: 13px; }
.visual-tools { position: absolute; right: 3px; top: 5px; display: flex; align-items: center; gap: 12px; }
.city .plot { height: 240px; margin-top: 6px; grid-template-columns: 80px 1fr; padding: 0 44px 0 9px; }
.city .yaxis { padding-top: 48px; }
.city .cats { padding: 5px 42px 0 91px; }
.vbars b { font-size: 14px; line-height: 20px; margin-bottom: 6px; font-weight: 700; }
.tip { position: absolute; left: 115px; top: 204px; width: 242px; height: 70px; background: #fff; padding: 17px 16px 0 0; z-index: 2; color: #252423; font-size: 12px; }
.tip::after { content: ""; position: absolute; right: -7px; bottom: 7px; border: 7px solid transparent; border-width: 7px 0 7px 7px; border-left-color: #fff; }
.tip table { border-spacing: 0; margin-left: auto; }
.tip th { font-weight: 400; text-align: right; padding: 0 12px 0 0; line-height: 19px; }
.tip td { padding: 0; }

.pages { height: 35px; display: flex; font-weight: 600; }
.layout { width: 24px; margin: 0 9px 4px 11px; border-bottom: 3px solid transparent; }
.layout.on { border-color: var(--green); }
.arrow { width: 20px; }
.page-tab { width: 76px; background: #fff; border-left: 1px solid #a19f9d; border-bottom: 4px solid var(--green); padding-top: 4px; }
.add { width: 40px; background: var(--green); }

.viz, .data { border-left: 1px solid var(--line); min-width: 0; }
.pane-head { display: flex; justify-content: space-between; align-items: center; padding: 8px 7px 0 8px; height: 30px; }
.pane-head h2 { font-size: 15px; line-height: 22px; font-weight: 600; }
.viz > h3 { padding: 8px 0 3px 7px; font-weight: 600; }
.modes { display: flex; gap: 34px; padding-left: 7px; }
.modes button { width: 32px; height: 32px; border-radius: 2px; }
.modes .on { background: #cfcdcb; }
.notch { margin: 3px 0 0 8px; position: relative; z-index: 1; }
.gallery { border-top: 1px solid #8a8886; margin-top: -1px; display: grid; grid-template-columns: repeat(6, 18px); gap: 10px; padding: 11px 10px 0; }
.gallery svg { width: 18px; height: 18px; overflow: visible; }
.k { fill: none; stroke: #3b3a39; } .w { fill: #fff; stroke: #555; } .b { fill: #83bdf0; stroke: #0f6cbd; } .g { fill: #c8c6c4; stroke: #797775; } .bl { fill: none; stroke: #0f6cbd; stroke-width: 1.5; } .o { fill: #fbc36b; stroke: #d4700f; }
.num { font: 8px "Open Sans", sans-serif; fill: #0078d4; }
.letter { font: 700 15px "Open Sans", sans-serif; fill: #1a7fd0; }
.dots { margin: 9px 0 12px 10px; font-size: 20px; }
.wells { border-top: 1px solid var(--line); padding: 8px 6px 0 3px; }
.wells h4 { padding: 0 8px; line-height: 18px; }
.wells .strong { margin-top: 10px; font-weight: 600; }
.well { height: 27px; margin-top: 4px; padding: 0 9px; border: 1px dashed #bebbb8; background: #fff; line-height: 25px; white-space: nowrap; }
.switch { display: flex; justify-content: space-between; align-items: center; height: 26px; padding: 0 16px 0 8px; }
.strong + .switch { margin-top: 3px; }
.toggle { width: 32px; height: 16px; display: grid; align-items: center; font-size: 9px; color: #605e5c; }
.toggle > * { grid-area: 1 / 1; }
.toggle input { appearance: none; margin: 0; width: 32px; height: 16px; border: 1px solid #797775; border-radius: 8px; background: radial-gradient(circle at 8px 7px, #605e5c 4px, transparent 5px) #fff; }
.toggle span { padding-left: 14px; pointer-events: none; }
.yes { color: #fff; }
.yes input { background: radial-gradient(circle at 22px 7px, #fff 4px, transparent 5px) var(--green); border-color: var(--green); }
.yes span { padding-left: 5px; }
.data-search { display: flex; align-items: center; gap: 6px; height: 25px; margin: 15px 5px 0 4px; padding-left: 12px; border: 1px solid #c8c6c4; border-bottom-color: #605e5c; border-radius: 4px; background: #fff; font-size: 12px; }
.data-search input { width: 130px; }
.tree { margin: 13px 0 0 15px; gap: 6px; }

.statusbar { height: 24px; border-top: 1px solid var(--line); display: flex; align-items: center; padding: 2px 5px 0 4px; color: #3b3a39; }
.zoom { margin-left: auto; display: flex; align-items: center; gap: 5px; font-size: 14px; }
.zoom input { appearance: none; width: 100px; height: 12px; background: linear-gradient(#605e5c, #605e5c) center / 100% 1px no-repeat; }
.zoom input::-webkit-slider-thumb { appearance: none; width: 5px; height: 11px; background: #605e5c; }
.percent { margin: 0 10px 0 12px; }
.statusbar a { margin-left: 9px; color: inherit; text-decoration: none; font-size: 12px; }

.taskbar { height: 49px; border-top: 2px solid #111; position: relative; display: grid; grid-template-columns: 1fr 534px 1fr; align-items: center; font-size: 12px; background: linear-gradient(90deg, #f5dfd5, #f8e5d8 16%, #f0e2c8 21%, #f7e7cc 28%, #f6e1d0 38%, #f7e5cb 45%, #eaf4a6 49%, #eef5a8 55%, #f8e5cf 58%, #f8e1d6 70%, #fce9dc 84%, #f3e0d2 90%, #f9e5d6 95%, #eff4d9 98%); }
.widget { justify-content: flex-start; padding-left: 20px; gap: 9px; text-align: left; }
.widget small { display: block; font-size: 12px; color: #605e5c; }
.apps { display: flex; align-items: center; justify-content: space-between; height: 47px; padding: 0 4px 0 8px; }
.apps button { width: 30px; height: 38px; border-radius: 4px; position: relative; }
.apps .current { width: 38px; background: #fff8; }
.open::after { content: ""; position: absolute; left: calc(50% - 3px); bottom: 0; width: 6px; height: 3px; border-radius: 2px; background: #8a8886; }
.current::after { left: calc(50% - 8px); width: 16px; background: #0078d4; }
.task-search { display: flex; align-items: center; gap: 10px; width: 218px; height: 32px; border-radius: 16px; padding: 0 6px 0 10px; background: #fffa; border-bottom: 1px solid #c0b8a8; font-size: 13px; }
.task-search input { flex: 1; }
.tray { display: flex; align-items: center; justify-content: flex-end; padding-right: 19px; gap: 21px; }
.tray svg:first-child { margin-right: -4px; }
.lang { font: 15px "DejaVu Sans", sans-serif; }
.tray svg:nth-last-child(2) { margin-left: -13px; }
.tray time { text-align: right; margin-left: -10px; width: 56px; }
.mark { position: absolute; left: 43%; width: 14%; bottom: 19px; text-align: center; font: 700 62px/64px "DejaVu Sans", sans-serif; color: #8886; opacity: .6; pointer-events: none; }
```
